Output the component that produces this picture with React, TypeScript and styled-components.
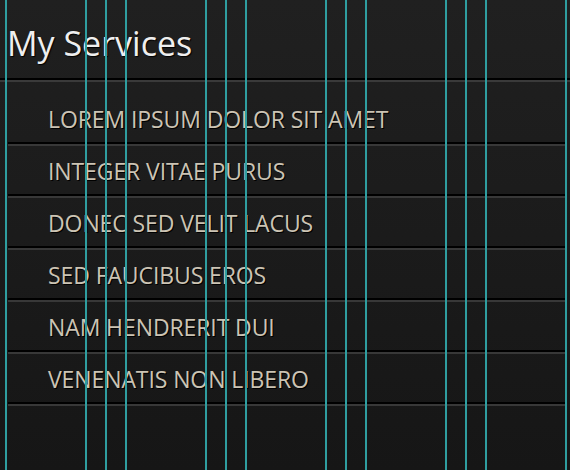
import React from "react";
import styled, { createGlobalStyle } from "styled-components";

const Global = createGlobalStyle`
  html, body { margin: 0; padding: 0; }
  body {
    width: 570px;
    height: 470px;
    overflow: hidden;
    background: linear-gradient(#202020, #161616);
  }
`;

const Page = styled.div`
  position: relative;
  width: 570px;
  height: 470px;
  overflow: hidden;
`;

const Header = styled.header`
  height: 80px;
  padding-left: 7px;
  box-sizing: border-box;
  display: flex;
  align-items: flex-end;
  border-bottom: 2px solid #000;
  box-shadow: 0 2px 0 #3a3a3a;
`;

const Title = styled.h1`
  margin: 0 0 15px;
  font-family: "Open Sans", "Noto Sans", sans-serif;
  font-weight: 400;
  font-size: 34px;
  line-height: 40px;
  letter-spacing: 0;
  color: #efefef;
  text-shadow: 1px 1px 1px #000;
`;

const List = styled.ul`
  list-style: none;
  margin: 2px 5px 0 8px;
  padding: 0;
  padding-top: 12px;
`;

const Item = styled.li`
  height: 50px;
  box-sizing: border-box;
  padding-top: 2px;
  display: flex;
  align-items: center;
  padding-left: 40px;
  border-bottom: 2px solid #000;
  box-shadow: 0 2px 0 #383838;
  margin-bottom: 2px;
  font-family: "Open Sans", "Noto Sans", sans-serif;
  font-size: 23px;
  letter-spacing: -0.1px;
  color: #ccc4b4;
  text-shadow: 1px 1px 0 #000;
`;

const Overlay = styled.div`
  position: absolute;
  inset: 0;
  pointer-events: none;
`;

const GuideLine = styled.div`
  position: absolute;
  top: 0;
  bottom: 0;
  width: 2px;
  background: #2f9ea0;
`;

const services = [
  "LOREM IPSUM DOLOR SIT AMET",
  "INTEGER VITAE PURUS",
  "DONEC SED VELIT LACUS",
  "SED FAUCIBUS EROS",
  "NAM HENDRERIT DUI",
  "VENENATIS NON LIBERO",
];

const guides: number[] = [];
for (let k = 0; k < 5; k++) {
  for (const o of [0, 80, 100]) {
    const x = 5 + k * 120 + o;
    if (x < 570) guides.push(x);
  }
}

export default function App() {
  return (
    <Page>
      <Global />
      <Header>
        <Title>My Services</Title>
      </Header>
      <List>
        {services.map((s) => (
          <Item key={s}>{s}</Item>
        ))}
      </List>
      <Overlay>
        {guides.map((x) => (
          <GuideLine key={x} style={{ left: x }} />
        ))}
      </Overlay>
    </Page>
  );
}
